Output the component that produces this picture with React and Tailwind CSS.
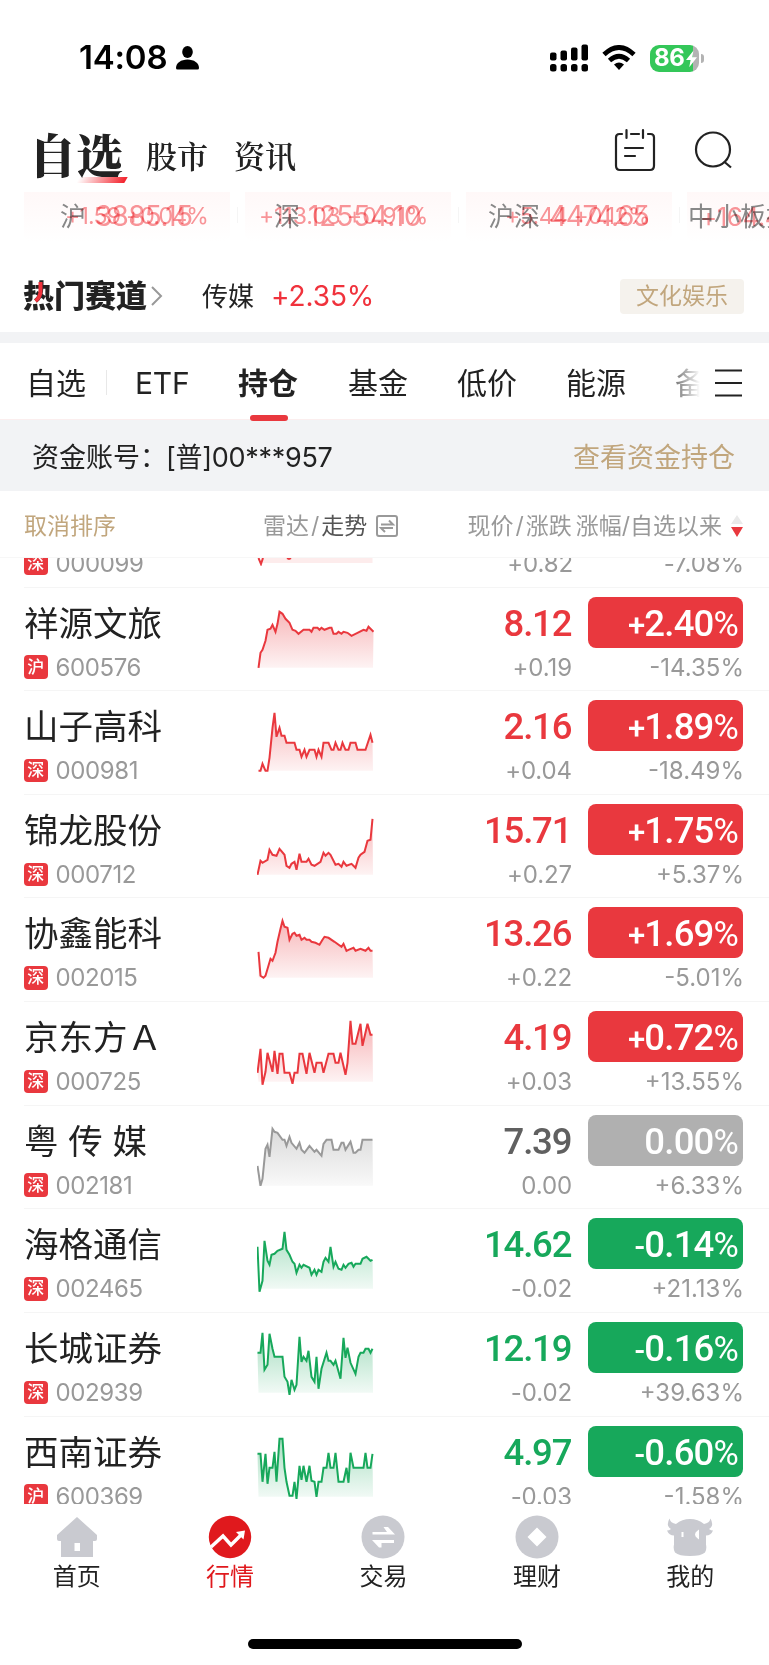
const cjk = "font-['Inter','Noto_Sans_CJK_SC',sans-serif]";

const stocks = [
  {
    name: '祥源文旅', market: '沪', code: '600576', price: '8.12', diff: '+0.19', sign: '+', pct: '2.40', since: '-14.35%', tone: 'up',
    line: '1,87 3,72 5,69 8,60 10,49 13,48 15,44 18,51 20,43 22,31 25,33 28,38 32,42 35,49 38,50 41,53 46,49 52,49 54,51 56,47 60,47 62,49 64,47 67,49 72,47 74,47 76,53 79,53 81,51 84,53 86,51 90,52 94,55 100,52 106,49 109,50 111,46 116,51',
  },
  {
    name: '山子高科', market: '深', code: '000981', price: '2.16', diff: '+0.04', sign: '+', pct: '1.89', since: '-18.49%', tone: 'up',
    line: '1,87 3,87 5,80 8,87 10,87 12,74 15,44 17,29 19,53 22,44 24,52 27,52 29,59 37,59 39,66 42,66 44,73 47,66 49,73 52,66 57,66 59,73 61,66 64,73 66,59 71,59 74,66 76,66 78,59 81,66 83,66 85,59 88,66 91,66 93,59 98,59 100,66 108,66 113,51 115,59',
  },
  {
    name: '锦龙股份', market: '深', code: '000712', price: '15.71', diff: '+0.27', sign: '+', pct: '1.75', since: '+5.37%', tone: 'up',
    line: '0,87 3,73 5,75 10,72 12,62 15,67 19,68 22,61 27,67 29,78 32,80 34,76 37,74 39,82 42,66 44,74 49,74 51,71 54,77 57,78 63,74 66,65 68,68 71,65 73,67 78,77 81,76 84,79 86,74 89,78 94,76 98,80 101,70 103,67 107,64 110,53 113,52 115,31',
  },
  {
    name: '协鑫能科', market: '深', code: '002015', price: '13.26', diff: '+0.22', sign: '+', pct: '1.69', since: '-5.01%', tone: 'up',
    line: '1,61 3,85 6,87 8,85 13,68 15,70 18,62 20,51 23,38 25,30 27,36 30,37 32,49 35,43 37,42 39,45 42,44 44,49 47,47 49,49 52,49 54,51 58,52 62,54 65,49 67,46 71,47 77,51 84,56 86,53 89,60 91,59 96,57 98,60 103,58 108,60 111,57 113,60 115,60',
  },
  {
    name: '京东方Ａ', market: '深', code: '000725', price: '4.19', diff: '+0.03', sign: '+', pct: '0.72', since: '+13.55%', tone: 'up',
    line: '0,78 3,54 5,90 8,77 10,58 15,77 17,56 20,79 22,59 25,59 27,78 32,78 35,89 37,78 40,78 42,59 45,59 49,79 52,58 57,78 59,68 64,68 66,78 71,59 76,59 78,68 81,68 83,58 88,80 90,68 93,26 95,49 98,49 103,29 105,51 110,29 113,40 115,40',
  },
  {
    name: '粤 传 媒', market: '深', code: '002181', price: '7.39', diff: '0.00', sign: '', pct: '0.00', since: '+6.33%', tone: 'flat',
    line: '0,67 3,87 5,80 8,50 10,46 12,58 15,30 17,33 20,34 25,41 27,41 29,47 32,38 34,44 39,50 42,44 44,51 47,54 52,47 57,53 59,51 64,57 66,45 69,41 74,41 76,51 81,51 84,44 86,44 88,51 93,43 96,54 98,54 101,51 103,51 105,41 115,41',
  },
  {
    name: '海格通信', market: '深', code: '002465', price: '14.62', diff: '-0.02', sign: '-', pct: '0.14', since: '+21.13%', tone: 'down',
    line: '0,45 2,90 5,79 7,39 10,59 12,63 14,53 17,52 20,49 25,47 27,30 29,48 32,53 35,60 37,62 39,71 42,63 44,66 46,63 52,66 54,73 57,68 59,73 61,68 64,70 66,60 68,56 71,60 73,45 76,65 78,60 81,67 84,68 86,63 88,66 91,62 94,61 96,65 98,62 103,62 105,57 109,55 113,59 115,58',
  },
  {
    name: '长城证券', market: '深', code: '002939', price: '12.19', diff: '-0.02', sign: '-', pct: '0.16', since: '+39.63%', tone: 'down',
    line: '0,47 3,47 5,27 7,64 10,59 12,28 15,43 17,51 25,51 27,71 30,76 32,89 34,74 37,84 39,79 42,31 44,56 46,51 49,55 51,45 54,71 57,76 59,51 61,83 64,63 69,47 71,55 73,55 76,59 78,55 83,73 86,32 88,52 90,42 93,57 98,68 101,51 103,47 106,47 108,43 111,43 113,47 115,43',
  },
  {
    name: '西南证券', market: '沪', code: '600369', price: '4.97', diff: '-0.03', sign: '-', pct: '0.60', since: '-1.58%', tone: 'down',
    line: '0,44 3,44 5,72 8,44 10,74 12,58 15,58 17,42 19,72 22,29 25,29 27,58 29,72 32,86 35,86 37,72 39,89 42,56 44,70 46,56 49,72 52,56 54,71 57,72 59,87 61,72 64,72 66,58 69,58 71,43 73,58 76,58 78,43 81,72 86,72 89,58 91,73 93,43 96,58 106,58 108,43 110,58 113,58 115,44',
  },
];

const tones = {
  up: { text: 'text-[#e9383e]', bg: 'bg-[#e9383e]', stroke: '#e9383e' },
  flat: { text: 'text-[#606060]', bg: 'bg-[#b0b0b0]', stroke: '#999999' },
  down: { text: 'text-[#17a85b]', bg: 'bg-[#17a85b]', stroke: '#17a85b' },
};

function StatusBar() {
  return (
    <div className="flex h-[116px] shrink-0 items-center justify-between pr-[65px] pl-[79px]">
      <div className="flex items-center gap-[9px]">
        <span className="text-[33px] font-semibold tracking-[-0.2px] text-black">14:08</span>
        <svg width="23" height="24" viewBox="0 0 23 24">
          <ellipse cx="11.5" cy="6" rx="5.3" ry="6" />
          <path d="M0 22c0-5 5-8.500 11.500-8.500S23 17 23 22q0 1.500-1.500 1.500h-20Q0 23.500 0 22z" />
        </svg>
      </div>
      <div className="flex items-center">
        <svg width="39" height="28" viewBox="0 0 39 28">
          {[0, 10.5, 21, 31.5].map((x, i) => (
            <g key={x}>
              <rect x={x} y={[8.5, 6.5, 3.5, 0.5][i]} width="6.500" height={[8, 10, 13, 16][i]} rx="2" />
              <rect x={x} y="20" width="6.500" height="7.500" rx="2.500" />
            </g>
          ))}
        </svg>
        <svg className="ml-[13px]" width="34" height="26" viewBox="0 0 34 26">
          <g fill="none" stroke="#000" strokeWidth="4.800">
            <path d="M2 9.500Q17-4.500 32 9.500" />
            <path d="M7.500 15.500Q17 7 26.500 15.500" />
          </g>
          <path d="M17 25l-5-5.500q5-4 10 0z" />
        </svg>
        <div className="ml-[14px] flex items-center gap-[2px]">
          <div className="relative flex h-[27px] w-[49px] items-center overflow-hidden rounded-[9px] bg-[linear-gradient(90deg,#34c759_87%,#b3b3b3_87%)] pl-[4px]">
            <span className="text-[24px] font-bold tracking-[-0.3px] text-white">86</span>
            <svg className="absolute top-[5px] left-[36px]" width="11" height="18" viewBox="0 0 12 18">
              <path d="M8 0L0 10h5L3.500 18 12 7H7z" fill="#fff" />
            </svg>
          </div>
          <div className="h-[9px] w-[3px] rounded-r-full bg-[#b3b3b3]" />
        </div>
      </div>
    </div>
  );
}

function Header() {
  return (
    <div className="flex h-[76px] shrink-0 items-center justify-between pr-[34px] pl-[29px] font-['Noto_Serif_CJK_SC','Noto_Sans_CJK_SC',serif] text-[#222]">
      <div className="flex items-center">
        <div className="relative mb-[3px] text-[47px] leading-[64px] font-black">
          <span className="absolute right-[-3px] bottom-[2px] h-[6px] w-[48px] -skew-x-[30deg] bg-linear-to-r from-transparent to-[#f3222c]" />
          <span className="relative">自选</span>
        </div>
        <span className="mt-[3px] ml-[23px] text-[31px] font-semibold">股市</span>
        <span className="mt-[3px] ml-[26px] text-[31px] font-semibold">资讯</span>
      </div>
      <div className="mb-[8px] flex gap-[37px]">
        <svg width="42" height="44" viewBox="0 0 42 44" fill="none" stroke="#222" strokeWidth="2.200" strokeLinecap="round">
          <path d="M8 6H5.500Q2 6 2 9.500v28Q2 42 6 42h30q4 0 4-4.500v-28Q40 6 36.500 6H34M17 6h8M12.500 2v8M29 2v8M11 20h18M11 28h10" />
        </svg>
        <svg width="42" height="44" viewBox="0 0 42 44" fill="none" stroke="#222" strokeWidth="2.200">
          <circle cx="20" cy="21.500" r="17" />
          <path d="M31 33.500l7 6" />
        </svg>
      </div>
    </div>
  );
}

// Index cards caught halfway through their flip: the two faces are both half visible.
function IndexCard({ label, labelClass, value, valueClass, change, changeClass }) {
  return (
    <div className="relative h-[50px] w-[205.500px] shrink-0 rounded-b-lg bg-linear-to-b from-[#fff8f8] to-white leading-[49px] whitespace-nowrap">
      <span className={`absolute top-0 text-[26px] text-[#888] ${labelClass}`}>{label}</span>
      <span className={`absolute top-0 text-[28px] text-[#f8969a] mix-blend-multiply ${valueClass}`}>{value}</span>
      <span className={`absolute top-0 text-[#f8969a] mix-blend-multiply ${changeClass}`}>{change}</span>
    </div>
  );
}

function Ticker() {
  const bar = <span className="mt-[15px] h-[16px] w-px shrink-0 bg-[#f5f5f5]" />;
  return (
    <div className="flex h-[50px] shrink-0 gap-[7.250px] overflow-hidden pl-[24px]">
      <IndexCard label="沪" labelClass="left-[36px]" value="3885.15" valueClass="left-[71px] tracking-[-0.7px]" change="+1.59 +0.04%" changeClass="left-[41px] text-[23px] tracking-[-0.8px]" />
      {bar}
      <IndexCard label="深" labelClass="left-[29px]" value="12554.10" valueClass="left-[63px] tracking-[-0.1px]" change="+113.03 +0.91%" changeClass="left-[14px] text-[23px] tracking-[-0.1px]" />
      {bar}
      <IndexCard label="沪深" labelClass="left-[22px]" value="4474.65" valueClass="left-[83px] tracking-[-1.4px]" change="+5.44 +0.12%" changeClass="left-[39px] text-[23px] tracking-[-0.5px]" />
      {bar}
      <IndexCard label="中小板指" labelClass="left-[1px]" value="" valueClass="" change="+164.42" changeClass="left-[13px] text-[26px] tracking-[-0.5px]" />
    </div>
  );
}

function HotTrack() {
  return (
    <div className="flex h-[90px] shrink-0 items-center pt-[18px] pr-[25px] pl-[23px]">
      <span className="relative text-[31px] font-black text-[#222]">
        热门赛道
        <svg className="absolute top-[8px] left-[10px]" width="11" height="23" viewBox="0 0 11 23">
          <path d="M7.500 1v9q0 6-5 10" fill="none" stroke="#f0323c" strokeWidth="4" />
        </svg>
      </span>
      <svg className="ml-[4px]" width="12" height="20" viewBox="0 0 12 20" fill="none" stroke="#999" strokeWidth="2">
        <path d="M1 1l9 9-9 9" />
      </svg>
      <span className="ml-[39px] text-[26px] text-[#222]">传媒</span>
      <span className="ml-[17px] text-[28px] tracking-[-0.1px] text-[#f0323c]">+2.35%</span>
      <span className="ml-auto flex h-[35px] w-[124px] items-center justify-center rounded bg-[#f5f2ed] text-[23px] text-[#c1a67d]">文化娱乐</span>
    </div>
  );
}

function GroupTabs() {
  return (
    <div className="flex h-[77px] shrink-0 border-b border-[#fbeeee] pl-[26px] text-[30px] leading-[80px] text-[#222]">
      <span className="w-[80px]">自选</span>
      <span className="mt-[27px] h-[25px] w-px bg-[#e8e8e8]" />
      <span className="ml-[28px] w-[103px] text-[30px] tracking-[-0.2px]">ETF</span>
      <span className="relative w-[110px] font-bold">
        持仓
        <i className="absolute top-[72px] left-[12px] h-[6px] w-[38px] rounded-full bg-[#e9383e]" />
      </span>
      <span className="w-[109px]">基金</span>
      <span className="w-[109px]">低价</span>
      <span className="w-[109px]">能源</span>
      <span className="w-[25px] overflow-hidden bg-linear-to-r from-[#777] to-white bg-clip-text text-transparent">备</span>
      <svg className="mt-[26px] ml-[15px]" width="28" height="28" viewBox="0 0 28 28" stroke="#222" strokeWidth="2.200">
        <path d="M0 1.500h27M0 14h27M0 26.500h27" />
      </svg>
    </div>
  );
}

function Columns() {
  return (
    <div className="flex h-[67px] shrink-0 items-center border-b border-[#f7f7f7] pt-[4px] pr-[25px] pl-[24px] text-[23px] text-[#999]">
      <span className="w-[239px] text-[#c1a67d]">取消排序</span>
      <span>雷达<span className="mx-[2px]">/</span><span className="text-[#555]">走势</span></span>
      <svg className="ml-[9px]" width="22" height="22" viewBox="0 0 22 22" fill="none" stroke="#999" strokeWidth="2">
        <rect x="1" y="1" width="20" height="20" rx="2" />
        <path d="M5 9.500h12l-4-4M17 13H5l4 4" />
      </svg>
      <span className="ml-auto whitespace-nowrap">现价<span className="mx-[2px]">/</span>涨跌</span>
      <span className="ml-[4px] whitespace-nowrap">涨幅/自选以来</span>
      <svg className="ml-[8px]" width="14" height="22" viewBox="0 0 14 22">
        <path d="M7 0l6 9H1z" fill="#eaeaea" />
        <path d="M1 12h12l-6 10z" fill="#e9383e" />
      </svg>
    </div>
  );
}

function Trend({ id, line, color }) {
  return (
    <svg width="118" height="103" viewBox="0 0 118 103">
      <defs>
        <linearGradient id={id} gradientUnits="userSpaceOnUse" x1="0" y1="27" x2="0" y2="87">
          <stop offset="0" stopColor={color} stopOpacity="0.380" />
          <stop offset="1" stopColor={color} stopOpacity="0.060" />
        </linearGradient>
      </defs>
      <g transform="translate(0.500 -7.200)">
        <path d={`M1 87L${line}L115.500 87z`} fill={`url(#${id})`} />
        <polyline points={line} fill="none" stroke={color} strokeWidth="2" />
      </g>
    </svg>
  );
}

function MarketTag({ children }) {
  return (
    <span className="mr-[8px] flex size-[23.500px] items-center justify-center rounded bg-[#e9383e] text-[17px] font-medium tracking-normal text-white">
      {children}
    </span>
  );
}

function StockRow({ stock }) {
  const tone = tones[stock.tone];
  return (
    <div className="ml-[24px] flex h-[103.625px] shrink-0 border-b border-[#f5f5f5] pr-[26px]">
      <div className="w-[233px] pt-[12px]">
        <div className="h-[48px] text-[34.500px] leading-[47px] whitespace-nowrap text-[#222]">{stock.name}</div>
        <div className="mt-[6px] flex items-center text-[24px] leading-[27px] tracking-[-0.4px] text-[#999]">
          <MarketTag>{stock.market}</MarketTag>
          {stock.code}
        </div>
      </div>
      <Trend id={`t${stock.code}`} line={stock.line} color={tone.stroke} />
      <div className="ml-auto pt-[9px] text-right">
        <div className={`-mr-[0.2px] h-[51px] pr-[1px] font-['Roboto'] text-[36.500px] leading-[53px] font-medium tracking-[-1.2px] ${tone.text}`}>{stock.price}</div>
        <div className="mt-[6px] text-[24px] leading-[27px] tracking-[-0.1px] text-[#999]">{stock.diff}</div>
      </div>
      <div className="ml-[16px] w-[155px] pt-[9px] text-right">
        <div className={`flex h-[51px] items-baseline justify-end rounded-lg pr-[5px] font-['Roboto'] text-[36.500px] leading-[53px] font-medium tracking-[-0.8px] text-white ${tone.bg}`}>
          <span className="text-[31px]">{stock.sign}</span>
          <span>{stock.pct}</span>
          <span className="text-[34.500px] font-normal">%</span>
        </div>
        <div className="-mr-[1px] mt-[6px] text-[24px] leading-[27px] text-[#999]">{stock.since}</div>
      </div>
    </div>
  );
}

const tabs = [
  {
    label: '首页',
    icon: <path fillRule="evenodd" d="M23 2L43 20v4q0 2-2 2h-2v16H7V26H5q-2 0-2-2v-4zM20.500 28v8h5.500v-8z" />,
  },
  {
    label: '行情',
    active: true,
    icon: (
      <>
        <circle cx="23" cy="22" r="21.200" />
        <path d="M4 32l12-11 8 9 11-11" fill="none" stroke="#fff" strokeWidth="3.500" />
        <path d="M38 15.500l-9 1.500 7.500 7.500z" fill="#fff" />
      </>
    ),
  },
  {
    label: '交易',
    icon: (
      <>
        <circle cx="23" cy="22" r="21.500" />
        <path d="M12.500 17H27l-3.500-5h4.500l7 7.500H12.500zM34 25H12l7 7.500h2.500V28H34z" fill="#fff" />
      </>
    ),
  },
  {
    label: '理财',
    icon: (
      <>
        <circle cx="23" cy="22" r="21.500" />
        <path d="M23 12.500l9.500 9.500-9.500 9.500-9.500-9.500z" fill="#fff" />
      </>
    ),
  },
  {
    label: '我的',
    icon: (
      <>
        <path d="M2.500 3.500q-4 7.500 1.500 10.500-2 1.500-4 1.500 2 5 7 5v9q-1 5 1 8 4 3.500 15 3.500t15-3.500q2-3 1-8v-9q5 0 7-5-2 0-4-1.500 5.500-3 1.500-10.500-1 4.500-6.500 5.500-6-5-14-5T9 9Q3.500 8 2.500 3.500z" />
        <path d="M15.500 17v5M31 16.500q-4 3 0 6z" fill="#fff" stroke="#fff" strokeWidth="2" />
      </>
    ),
  },
];

export default function App() {
  return (
    <div className={`flex h-[1665px] w-[769px] flex-col overflow-hidden bg-white ${cjk}`}>
      <StatusBar />
      <Header />
      <Ticker />
      <HotTrack />
      <div className="h-[11px] shrink-0 bg-[#f2f3f5]" />
      <GroupTabs />
      <div className="flex h-[71px] shrink-0 items-center justify-between bg-[#f2f3f5] pt-[5px] pr-[34px] pl-[32px] text-[27px] text-[#222]">
        <span>资金账号：<span className="-ml-[1px] tracking-[-0.3px]">[普]00***957</span></span>
        <span className="text-[#c1a67d]">查看资金持仓</span>
      </div>
      <Columns />
      <div className="flex h-[946px] shrink-0 flex-col overflow-hidden">
        <div className="ml-[24px] flex h-[29.500px] shrink-0 items-start border-b border-[#f5f5f5] pr-[25px] text-[24px] tracking-[-0.1px] text-[#999]">
          <div className="-mt-[8px] flex w-[233px] items-center leading-[27px] tracking-[-0.4px]">
            <MarketTag>深</MarketTag>000099
          </div>
          <svg width="118" height="8" viewBox="0 0 118 8">
            <path d="M4 0h111.500v5H6z" fill="#fdecec" />
            <path d="M1.500 0L4 6l2-6M30 0l2 1 2-1" fill="none" stroke="#e9383e" strokeWidth="2" />
          </svg>
          <span className="-mt-[8px] ml-auto leading-[27px]">+0.82</span>
          <span className="-mt-[8px] w-[171px] text-right leading-[27px]">-7.08%</span>
        </div>
        {stocks.map((s) => <StockRow key={s.code} stock={s} />)}
      </div>
      <div className="mr-[2px] grid shrink-0 grid-cols-5 pt-[11px]">
        {tabs.map((t) => (
          <div key={t.label} className={`flex flex-col items-center text-[24px] leading-[36px] ${t.active ? 'text-[#e0191d]' : 'text-[#222]'}`}>
            <svg width="46" height="44" viewBox="0 0 46 44" fill={t.active ? '#e0191d' : '#c9cad0'}>{t.icon}</svg>
            {t.label}
          </div>
        ))}
      </div>
      <div className="mx-auto mt-auto mb-[16px] h-[10px] w-[274px] shrink-0 rounded-full bg-black" />
    </div>
  );
}
